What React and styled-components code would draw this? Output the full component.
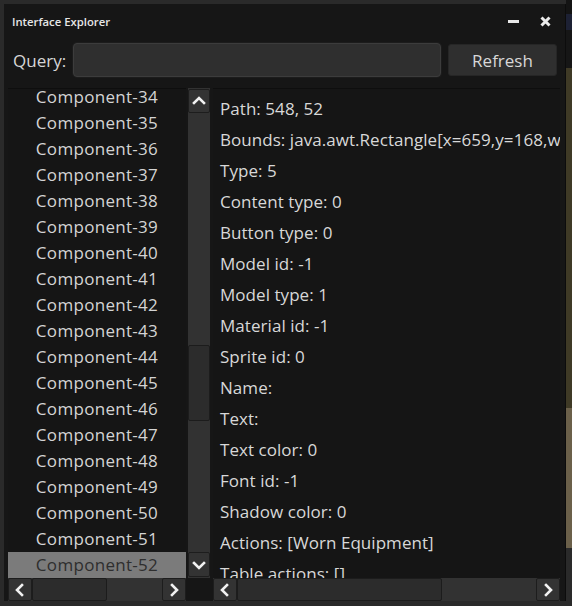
import React from "react";
import styled, { createGlobalStyle } from "styled-components";

const Global = createGlobalStyle`
  html, body { margin: 0; padding: 0; background: #2a2a2a; }
  body { font-family: "Open Sans", "Noto Sans", sans-serif; }
`;

const Page = styled.div`
  width: 572px;
  height: 606px;
  display: flex;
  background: #2a2a2a;
  overflow: hidden;
`;

const Window = styled.div`
  margin: 4px 0 5px 4px;
  width: 562px;
  height: 597px;
  background: #161616;
  display: flex;
  flex-direction: column;
  box-sizing: border-box;
  border-right: 1px solid #0c0c0c;
`;

const Backdrop = styled.div`
  flex: 1;
  display: flex;
  flex-direction: column;
  background: #121212;
`;

const BackdropBand = styled.div`
  height: ${(p) => p.$h}px;
  background: ${(p) => p.$c};
  flex: ${(p) => (p.$grow ? 1 : "none")};
`;

const TitleBar = styled.div`
  height: 34px;
  display: flex;
  align-items: center;
  padding: 0 14px 0 8px;
  box-sizing: border-box;
`;

const Title = styled.div`
  flex: 1;
  font-size: 11.3px;
  font-weight: 600;
  color: #e6e6e6;
`;

const TitleButton = styled.div`
  width: 12px;
  height: 12px;
  margin-left: ${(p) => p.$gap || 0}px;
  display: flex;
  align-items: center;
  justify-content: center;
`;

const QueryRow = styled.div`
  height: 44px;
  display: flex;
  align-items: center;
  padding: 0 8px 0 9px;
  gap: 7px;
`;

const Label = styled.label`
  font-size: 17px;
  color: #d6d6d6;
`;

const Input = styled.input`
  flex: 1;
  height: 34px;
  box-sizing: border-box;
  background: #2f2f2f;
  border: 1px solid #3c3c3c;
  border-radius: 4px;
  box-shadow: 0 0 0 1px #1c1c1c;
  outline: none;
  color: #ddd;
  font-family: inherit;
  font-size: 16px;
`;

const Button = styled.button`
  width: 109px;
  height: 32px;
  background: #2f2f2f;
  border: 1px solid #262626;
  border-radius: 3px;
  color: #d8d8d8;
  font-family: inherit;
  font-size: 17px;
  padding: 0;
`;

const Body = styled.div`
  margin-top: 6px;
  flex: 1;
  display: grid;
  grid-template-columns: 180px 22px 350px;
  grid-template-rows: 490px 23px;
  padding-left: 4px;
`;

const ListViewport = styled.div`
  overflow: hidden;
  background: #151515;
  border-top: 1px solid #0e0e0e;
  box-sizing: border-box;
  margin-right: 2px;
`;

const ListInner = styled.div`
  margin-top: -5px;
`;

const ListRow = styled.div`
  height: 26px;
  line-height: 26px;
  text-align: center;
  font-size: 17px;
  letter-spacing: 0.3px;
  color: ${(p) => (p.$selected ? "#2e2e2e" : "#d4d4d4")};
  background: ${(p) => (p.$selected ? "#7b7b7b" : "transparent")};
  white-space: nowrap;
`;

const VScroll = styled.div`
  display: flex;
  flex-direction: column;
  background: #323232;
  padding: 1px 0;
  box-sizing: border-box;
`;

const ScrollBtn = styled.div`
  flex: none;
  width: ${(p) => p.$w || 24}px;
  height: ${(p) => p.$h || 23}px;
  box-sizing: border-box;
  background: #333333;
  border: 1px solid #1d1d1d;
  border-radius: 2px;
  display: flex;
  align-items: center;
  justify-content: center;
`;

const Track = styled.div`
  flex: 1;
  display: flex;
  flex-direction: ${(p) => (p.$vertical ? "column" : "row")};
  background: #323232;
`;

const Thumb = styled.div`
  flex: none;
  box-sizing: border-box;
  background: #2c2c2c;
  border: 1px solid #1c1c1c;
  border-radius: 2px;
`;

const Details = styled.div`
  grid-column: 3;
  grid-row: 1;
  margin-left: 3px;
  overflow: hidden;
  background: #151515;
  border-top: 1px solid #0e0e0e;
  box-sizing: border-box;
  padding-top: 4px;
`;

const DetailRow = styled.div`
  height: 31px;
  line-height: 31px;
  padding-left: 7px;
  font-size: 17px;
  letter-spacing: 0.05px;
  color: #d8d8d8;
  white-space: nowrap;
`;

const HScroll = styled.div`
  display: flex;
  background: #323232;
  margin-left: ${(p) => p.$ml || 0}px;
  margin-right: ${(p) => p.$mr || 0}px;
  grid-column: ${(p) => p.$col};
`;

const Chevron = ({ dir }) => {
  const pts = {
    up: "3,10 8,5 13,10",
    down: "3,6 8,11 13,6",
    left: "10,3 5,8 10,13",
    right: "6,3 11,8 6,13",
  }[dir];
  return (
    <svg width="16" height="16" viewBox="0 0 16 16">
      <polyline points={pts} fill="none" stroke="#f2f2f2" strokeWidth="2.6" strokeLinecap="square" />
    </svg>
  );
};

const items = Array.from({ length: 19 }, (_, i) => 34 + i);

const details = [
  "Path: 548, 52",
  "Bounds: java.awt.Rectangle[x=659,y=168,width=36,height=36]",
  "Type: 5",
  "Content type: 0",
  "Button type: 0",
  "Model id: -1",
  "Model type: 1",
  "Material id: -1",
  "Sprite id: 0",
  "Name:",
  "Text:",
  "Text color: 0",
  "Font id: -1",
  "Shadow color: 0",
  "Actions: [Worn Equipment]",
  "Table actions: []",
];

export default function App() {
  return (
    <Page>
      <Global />
      <Window>
        <TitleBar>
          <Title>Interface Explorer</Title>
          <TitleButton>
            <svg width="11" height="12" viewBox="0 0 11 12">
              <rect x="0" y="5" width="11" height="3" fill="#e8e8e8" />
            </svg>
          </TitleButton>
          <TitleButton $gap={20}>
            <svg width="11" height="11" viewBox="0 0 11 11">
              <path d="M1.5 1.5 L9.5 9.5 M9.5 1.5 L1.5 9.5" stroke="#ececec" strokeWidth="3" />
            </svg>
          </TitleButton>
        </TitleBar>
        <QueryRow>
          <Label>Query:</Label>
          <Input />
          <Button>Refresh</Button>
        </QueryRow>
        <Body>
          <ListViewport>
            <ListInner>
              {items.map((n) => (
                <ListRow key={n} $selected={n === 52}>
                  Component-{n}
                </ListRow>
              ))}
            </ListInner>
          </ListViewport>
          <VScroll>
            <ScrollBtn $w={22} $h={24}>
              <Chevron dir="up" />
            </ScrollBtn>
            <Track $vertical>
              <div style={{ height: 232 }} />
              <Thumb style={{ height: 76 }} />
            </Track>
            <ScrollBtn $w={22} $h={25}>
              <Chevron dir="down" />
            </ScrollBtn>
          </VScroll>
          <Details>
            {details.map((d) => (
              <DetailRow key={d}>{d}</DetailRow>
            ))}
          </Details>
          <HScroll $col="1" $mr={2}>
            <ScrollBtn>
              <Chevron dir="left" />
            </ScrollBtn>
            <Track>
              <Thumb style={{ width: 75 }} />
            </Track>
            <ScrollBtn>
              <Chevron dir="right" />
            </ScrollBtn>
          </HScroll>
          <HScroll $col="3" $ml={3}>
            <ScrollBtn>
              <Chevron dir="left" />
            </ScrollBtn>
            <Track>
              <Thumb style={{ width: 205 }} />
            </Track>
            <ScrollBtn>
              <Chevron dir="right" />
            </ScrollBtn>
          </HScroll>
        </Body>
      </Window>
      <Backdrop>
        <BackdropBand $h={14} $c="#141414" />
        <BackdropBand $h={16} $c="#1d2134" />
        <BackdropBand $h={38} $c="#161616" />
        <BackdropBand $h={340} $c="#3f3a26" />
        <BackdropBand $h={140} $c="#6b604a" />
        <BackdropBand $grow $c="#2a2a2a" />
      </Backdrop>
    </Page>
  );
}
